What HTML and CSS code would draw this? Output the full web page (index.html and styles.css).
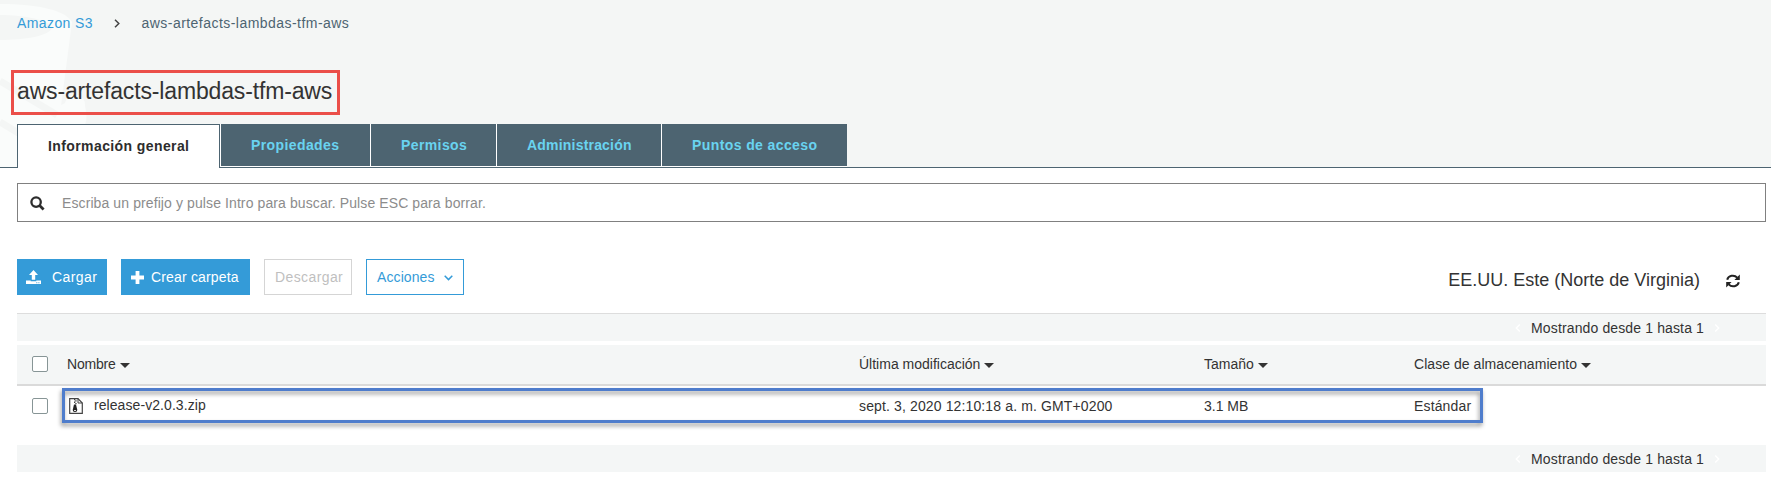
FILE: index.html
```html
<!DOCTYPE html>
<html lang="es">
<head>
<meta charset="utf-8">
<title>aws-artefacts-lambdas-tfm-aws</title>
<link rel="stylesheet" href="styles.css">
</head>
<body>
<header class="header">
  <svg class="bucket" width="100" height="167" viewBox="0 0 100 167">
    <path d="M0 4C40 4 66 11 72 22L53 167H0Z" fill="#fafcfb"/>
    <path d="M0 15C25 15 49 20 52 28C49 36 25 40 0 40Z" fill="#f4f6f5"/>
    <path d="M65 103A10 10 0 0 1 85 106Q89 124 82 127L55 124L61 105Z" fill="#fafcfb"/>
    <path d="M0 81L57 115M0 122L20 134" stroke="#f4f6f5" stroke-width="7" fill="none"/>
  </svg>
  <nav class="crumbs">
    <a class="crumb-link">Amazon S3</a>
    <svg class="crumb-sep" width="6" height="9" viewBox="0 0 6 9"><path d="M1 .7L4.8 4.5L1 8.3" fill="none" stroke="#444" stroke-width="1.5"/></svg>
    <span class="crumb-current">aws-artefacts-lambdas-tfm-aws</span>
  </nav>
  <h1 class="title">aws-artefacts-lambdas-tfm-aws</h1>
  <div class="tabs">
    <div class="tab active">Información general</div>
    <div class="tab props">Propiedades</div>
    <div class="tab perms">Permisos</div>
    <div class="tab admin">Administración</div>
    <div class="tab access">Puntos de acceso</div>
  </div>
</header>
<main class="content">
  <div class="search">
    <svg width="15" height="15" viewBox="0 0 15 15"><circle cx="6.1" cy="6.1" r="4.7" fill="none" stroke="#2d2d2d" stroke-width="2.3"/><path d="M9.6 9.6L13.6 13.6" stroke="#2d2d2d" stroke-width="2.8"/></svg>
    <span class="placeholder">Escriba un prefijo y pulse Intro para buscar. Pulse ESC para borrar.</span>
  </div>
  <div class="toolbar">
    <div class="btn upload">
      <svg width="15" height="15" viewBox="0 0 15 15" fill="#fff"><path d="M7.5 0L12 5H9.2V9.8H5.8V5H3Z"/><path d="M0 10.4H4.7V11.2H10.3V10.4H15V14H0Z"/><path d="M10.3 12.2h1v1h-1zM12.4 12.2h1v1h-1z" fill="#349bd8"/></svg>
      <span>Cargar</span>
    </div>
    <div class="btn create">
      <svg width="13" height="13" viewBox="0 0 13 13"><path d="M6.5 0V13M0 6.5H13" stroke="#fff" stroke-width="3.8"/></svg>
      <span>Crear carpeta</span>
    </div>
    <div class="btn download"><span>Descargar</span></div>
    <div class="btn actions">
      <span>Acciones</span>
      <svg width="9" height="6" viewBox="0 0 9 6"><path d="M.7 .8L4.5 4.6L8.3 .8" fill="none" stroke="#349bd8" stroke-width="1.5"/></svg>
    </div>
    <span class="region">EE.UU. Este (Norte de Virginia)</span>
    <svg class="refresh" width="14" height="14" viewBox="0 0 14 14"><path d="M1.2 5.8A5.7 5.2 0 0 1 11.2 3.6M12.8 8.2A5.7 5.2 0 0 1 2.8 10.4" fill="none" stroke="#222" stroke-width="2"/><path d="M13.8 .6V6H8.4ZM.2 13.4V8H5.6Z" fill="#222"/></svg>
  </div>
  <div class="pager top">
    <svg width="6" height="8" viewBox="0 0 6 8"><path d="M4.8 .5L1.3 4L4.8 7.5" fill="none" stroke="#fff" stroke-width="1.4"/></svg>
    <span>Mostrando desde 1 hasta 1</span>
    <svg width="6" height="8" viewBox="0 0 6 8"><path d="M1.2 .5L4.7 4L1.2 7.5" fill="none" stroke="#fff" stroke-width="1.4"/></svg>
  </div>
  <div class="row head">
    <i class="check"></i>
    <div class="cell"><span class="h-name">Nombre</span><i class="caret"></i></div>
    <div class="cell"><span class="h-date">Última modificación</span><i class="caret"></i></div>
    <div class="cell"><span class="h-size">Tamaño</span><i class="caret"></i></div>
    <div class="cell"><span class="h-class">Clase de almacenamiento</span><i class="caret"></i></div>
  </div>
  <div class="row item">
    <i class="check"></i>
    <div class="cell file">
      <svg width="14" height="16" viewBox="0 0 14 16"><path d="M.7 .7H9L13.3 5V15.3H.7Z" fill="#fff" stroke="#444" stroke-width="1.2"/><path d="M9 .7V5H13.3" fill="none" stroke="#444"/><path d="M5 1h1.3v1.3H5zM6.3 2.3h1.3v1.3H6.3zM5 3.6h1.3v1.3H5zM6.3 4.9h1.3v1.3H6.3z" fill="#444"/><path d="M5 6.5H7L8.2 11.5Q8.4 14 6 14Q3.6 14 3.8 11.5Z" fill="#222"/><path d="M5 11.9h2v1H5z" fill="#ddd"/></svg>
      <span class="filename">release-v2.0.3.zip</span>
    </div>
    <div class="cell"><span class="v-date">sept. 3, 2020 12:10:18 a. m. GMT+0200</span></div>
    <div class="cell"><span class="v-size">3.1 MB</span></div>
    <div class="cell"><span class="v-class">Estándar</span></div>
    <div class="highlight"></div>
  </div>
  <div class="pager bottom">
    <svg width="6" height="8" viewBox="0 0 6 8"><path d="M4.8 .5L1.3 4L4.8 7.5" fill="none" stroke="#fff" stroke-width="1.4"/></svg>
    <span>Mostrando desde 1 hasta 1</span>
    <svg width="6" height="8" viewBox="0 0 6 8"><path d="M1.2 .5L4.7 4L1.2 7.5" fill="none" stroke="#fff" stroke-width="1.4"/></svg>
  </div>
</main>
</body>
</html>
```

FILE: styles.css
```css
* { box-sizing: border-box; }
body {
  margin: 0;
  height: 477px;
  overflow: hidden;
  background: #fff;
  color: #333;
  font: 14px/20px "Liberation Sans", Arial, sans-serif;
  white-space: nowrap;
}
svg { display: block; flex: none; }

.header {
  position: relative;
  height: 168px;
  padding-left: 17px;
  background: #f4f6f5;
  border-bottom: 1px solid #4d6471;
}
.bucket { position: absolute; left: 0; top: 0; }
.crumbs {
  position: relative;
  display: flex;
  align-items: center;
  height: 46px;
}
.crumb-link { width: 97px; color: #349bd8; letter-spacing: .4px; }
.crumb-sep { margin-right: 21.5px; }
.crumb-current { color: #4d6471; letter-spacing: .46px; }
.title {
  position: relative;
  width: 329px;
  height: 45px;
  margin: 24px 0 9px -6px;
  padding-left: 3px;
  border: 3px solid #eb4f49;
  font-size: 23px;
  font-weight: 400;
  line-height: 37px;
  letter-spacing: -.15px;
}
.tabs { position: relative; display: flex; gap: 1px; height: 44px; }
.tab {
  height: 43px;
  padding-left: 30px;
  border-bottom: 1px solid #fff;
  background: #4d6471;
  box-shadow: -1px 0 #fff;
  color: #69d3f0;
  font-weight: 700;
  line-height: 42px;
  letter-spacing: .4px;
}
.tab.active {
  width: 203px;
  height: 44px;
  border: 1px solid #4d6471;
  border-bottom: 0;
  background: #fff;
  box-shadow: none;
  color: #2d2d2d;
}
.props { width: 149px; }
.perms { width: 125px; }
.admin { width: 164px; letter-spacing: .2px; }
.access { width: 185px; }

.content { padding: 15px 5px 0 17px; }
.search {
  display: flex;
  align-items: center;
  height: 39px;
  padding-left: 12px;
  gap: 17px;
  border: 1px solid #808080;
}
.search svg { margin-top: 2px; }
.placeholder { color: #8c8c8c; padding-top: 1px; letter-spacing: .1px; }

.toolbar { display: flex; height: 36px; margin: 37px 0 18px; }
.btn {
  display: flex;
  align-items: center;
  height: 36px;
  margin-right: 14px;
  border: 1px solid #349bd8;
  letter-spacing: .4px;
}
.upload, .create { background: #349bd8; color: #fff; }
.upload { width: 90px; padding-left: 8px; gap: 11px; }
.create { width: 129px; padding-left: 9px; gap: 7px; letter-spacing: .17px; }
.download { width: 88px; padding-left: 10px; border-color: #d5d5d5; color: #bfbfbf; }
.actions { width: 98px; padding-left: 10px; gap: 9px; color: #349bd8; letter-spacing: .1px; }
.actions svg { margin-top: 2px; }
.region { margin-left: auto; margin-right: 26px; font-size: 18px; line-height: 42px; }
.refresh { margin: 15px 26px 0 0; }

.pager {
  display: flex;
  align-items: center;
  justify-content: flex-end;
  gap: 10px;
  padding-right: 46px;
  background: #f4f6f6;
  letter-spacing: .13px;
}
.pager.top { height: 28px; border-top: 1px solid #ddd; }
.pager.bottom { height: 27px; margin-top: 20px; }

.row {
  position: relative;
  display: grid;
  grid-template-columns: 50px 792px 345px 210px auto;
  align-items: center;
}
.head {
  height: 41px;
  margin-top: 4px;
  background: #f4f6f6;
  border-bottom: 2px solid #dadada;
}
.item { height: 39px; }
.check {
  width: 16px;
  height: 16px;
  margin-left: 15px;
  border: 1px solid #879596;
  border-radius: 2px;
  background: #fff;
}
.head .check { margin-bottom: 1px; }
.cell { display: flex; align-items: center; }
.head .cell { padding-bottom: 1px; }
.h-name { letter-spacing: -.2px; }
.h-class { letter-spacing: .05px; }
.caret {
  margin: 2px 0 0 4px;
  border: 5px solid transparent;
  border-top-color: #333;
  border-bottom: 0;
}
.file { gap: 11px; padding-left: 2px; }
.filename { padding-bottom: 2px; letter-spacing: .07px; }
.v-date { letter-spacing: .13px; }
.v-class { letter-spacing: .15px; }
.highlight {
  position: absolute;
  left: 45px;
  top: 2px;
  width: 1421px;
  height: 35px;
  border: 3px solid #4f7dcc;
  filter: drop-shadow(-1px 3px 2px rgba(0, 0, 0, .4));
}
```
